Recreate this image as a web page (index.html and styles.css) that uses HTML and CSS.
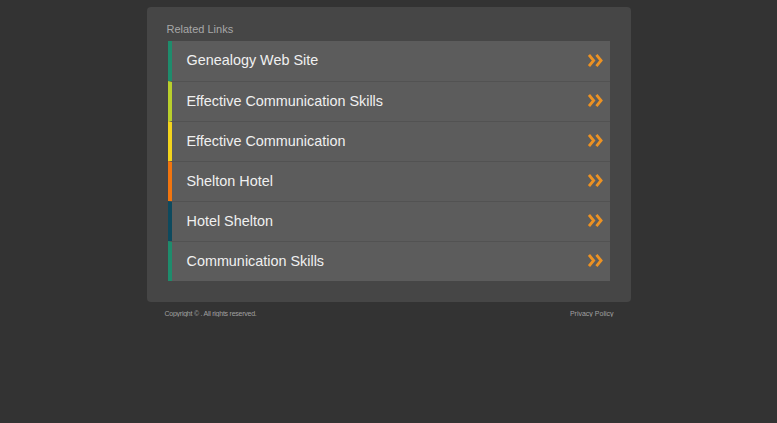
FILE: index.html
```html
<!DOCTYPE html>
<html lang="en">
  <head>
    <meta charset="UTF-8" />
    <meta name="viewport" content="width=device-width, initial-scale=1.0" />
    <title>Related Links</title>

    <link rel="stylesheet" href="styles.css">
  </head>
  <body>
    <div class="wrapper">
      <section class="related">
        <h2 class="related-title">Related Links</h2>

        <ul class="links">
          <li class="link teal">
            <a href="#">Genealogy Web Site</a>
            <svg class="arrows" viewBox="0 0 16 14"><path d="M1 1l5 6-5 6M9 1l5 6-5 6" /></svg>
          </li>
          <li class="link lime">
            <a href="#">Effective Communication Skills</a>
            <svg class="arrows" viewBox="0 0 16 14"><path d="M1 1l5 6-5 6M9 1l5 6-5 6" /></svg>
          </li>
          <li class="link yellow">
            <a href="#">Effective Communication</a>
            <svg class="arrows" viewBox="0 0 16 14"><path d="M1 1l5 6-5 6M9 1l5 6-5 6" /></svg>
          </li>
          <li class="link orange">
            <a href="#">Shelton Hotel</a>
            <svg class="arrows" viewBox="0 0 16 14"><path d="M1 1l5 6-5 6M9 1l5 6-5 6" /></svg>
          </li>
          <li class="link navy">
            <a href="#">Hotel Shelton</a>
            <svg class="arrows" viewBox="0 0 16 14"><path d="M1 1l5 6-5 6M9 1l5 6-5 6" /></svg>
          </li>
          <li class="link teal">
            <a href="#">Communication Skills</a>
            <svg class="arrows" viewBox="0 0 16 14"><path d="M1 1l5 6-5 6M9 1l5 6-5 6" /></svg>
          </li>
        </ul>
      </section>

      <footer class="footer">
        <span>Copyright &copy; . All rights reserved.</span>
        <a href="#">Privacy Policy</a>
      </footer>
    </div>
  </body>
</html>
```

FILE: styles.css
```css
body {
  margin: 0;
  background: #333333;
  font-family: "Liberation Sans", Arial, sans-serif;
}

.wrapper {
  width: 484px;
  margin: 7px auto 0;
}

.related {
  background: #464646;
  border-radius: 4px;
  padding: 16px 21px 21px;
}

.related-title {
  margin: 0 0 5px -1px;
  font-size: 11px;
  font-weight: normal;
  color: #a8a8a8;
  line-height: 13px;
}

.links {
  list-style: none;
  margin: 0;
  padding: 0;
}

.link {
  display: flex;
  align-items: center;
  justify-content: space-between;
  height: 40px;
  box-sizing: border-box;
  background: #5c5c5c;
  border-left: 4px solid #1e8c6c;
  border-top: 1px solid #525252;
  padding: 0 7px 2px 15px;
}

.link:first-child {
  border-top: none;
}

.link a {
  color: #f0f0f0;
  text-decoration: none;
  font-size: 14.4px;
}

.link.teal { border-left-color: #1e8c6c; }
.link.lime { border-left-color: #b9cf2c; }
.link.yellow { border-left-color: #f3d41d; }
.link.orange { border-left-color: #f2750f; }
.link.navy { border-left-color: #0e4a5e; }

.arrows {
  width: 15px;
  height: 13px;
  fill: none;
  stroke: #ec9223;
  stroke-width: 3;
  stroke-linejoin: miter;
}

.footer {
  display: flex;
  justify-content: space-between;
  padding: 8px 17px 0 18px;
  font-size: 7px;
  color: #a0a0a0;
}

.footer span {
  letter-spacing: -0.25px;
}

.footer a {
  color: #a0a0a0;
  text-decoration: none;
}
```
